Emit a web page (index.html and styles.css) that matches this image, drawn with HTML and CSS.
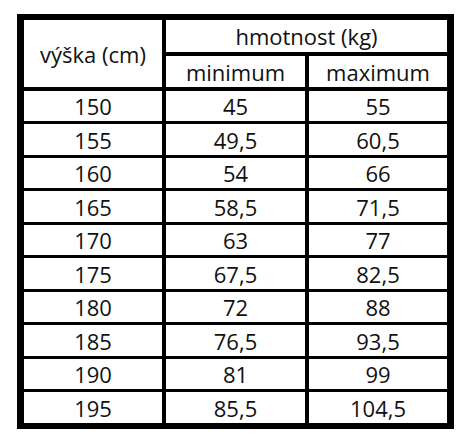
FILE: index.html
```html
<!DOCTYPE html>
<html lang="cs">
<head>
  <meta charset="UTF-8">
  <meta name="viewport" content="width=device-width, initial-scale=1.0">
  <title>Výška a hmotnost</title>
  <link rel="stylesheet" href="styles.css">
</head>
<body>
  <table class="weights">
    <thead>
      <tr class="head-top">
        <th rowspan="2" class="col-height">výška (cm)</th>
        <th colspan="2" class="col-weight">hmotnost (kg)</th>
      </tr>
      <tr class="head-sub">
        <th class="col-min">minimum</th>
        <th class="col-max">maximum</th>
      </tr>
    </thead>
    <tbody>
      <tr class="r30"><td>150</td><td>45</td><td>55</td></tr>
      <tr class="r31"><td>155</td><td>49,5</td><td>60,5</td></tr>
      <tr class="r30"><td>160</td><td>54</td><td>66</td></tr>
      <tr class="r31"><td>165</td><td>58,5</td><td>71,5</td></tr>
      <tr class="r30"><td>170</td><td>63</td><td>77</td></tr>
      <tr class="r31"><td>175</td><td>67,5</td><td>82,5</td></tr>
      <tr class="r30"><td>180</td><td>72</td><td>88</td></tr>
      <tr class="r31"><td>185</td><td>76,5</td><td>93,5</td></tr>
      <tr class="r30"><td>190</td><td>81</td><td>99</td></tr>
      <tr class="r31 last"><td>195</td><td>85,5</td><td>104,5</td></tr>
    </tbody>
  </table>
</body>
</html>
```

FILE: styles.css
```css
body {
  margin: 0;
  padding: 14px 0 0 17px;
  background-color: #ffffff;
  font-family: "Open Sans", "Liberation Sans", sans-serif;
  color: #111111;
}
.weights {
  border-collapse: separate;
  border-spacing: 0;
  table-layout: fixed;
  border-style: solid;
  border-color: #000000;
  border-width: 6px 7px;
  font-size: 22px;
}
.weights th,
.weights td {
  padding: 0;
  text-align: center;
  vertical-align: middle;
  font-weight: normal;
  border: 0 solid #000000;
  line-height: 1;
}
.weights td:nth-child(1),
.weights td:nth-child(2) {
  border-right-width: 4px;
}
.weights td:nth-child(1) {
  width: 138px;
}
.weights td:nth-child(2) {
  width: 139px;
}
.weights td:nth-child(3) {
  width: 138px;
}
.weights td {
  border-bottom-width: 3px;
}
.weights tr.last td {
  border-bottom-width: 0;
}
.r30 td {
  height: 30px;
}
.r31 td {
  height: 31px;
}
.col-height {
  border-right-width: 4px !important;
  border-bottom-width: 4px !important;
}
.col-weight {
  height: 32px;
  border-bottom-width: 4px !important;
}
.col-min {
  height: 31px;
  border-right-width: 4px !important;
  border-bottom-width: 4px !important;
}
.col-max {
  border-bottom-width: 4px !important;
}
```
